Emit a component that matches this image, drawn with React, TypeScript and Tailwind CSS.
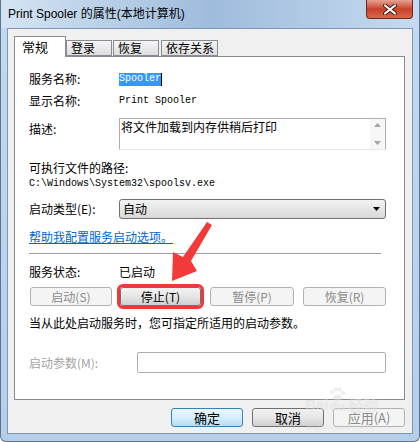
import React from 'react';

const cjk = "font-['Noto_Sans_CJK_SC','Noto_Sans',sans-serif]";
const mono = "font-['Liberation_Mono','Noto_Sans_CJK_SC',monospace]";

const Tab: React.FC<{ label: string; active?: boolean; className?: string }> = ({ label, active, className }) =>
  active ? (
    <div className={`relative z-10 h-[21px] w-[52px] -mb-[1px] border border-b-0 border-[#898c95] bg-white flex items-start pl-[7px] pt-[2px] text-[13px] leading-[16px] whitespace-nowrap ${className ?? ''}`}>
      {label}
    </div>
  ) : (
    <div className={`mt-[4px] h-[16px] border border-[#898c95] bg-gradient-to-b from-[#f6f6f6] to-[#dedede] flex items-center pl-[4px] text-[12px] leading-[14px] whitespace-nowrap overflow-hidden ${className ?? ''}`}>
      {label}
    </div>
  );

const Btn: React.FC<{ label: string; disabled?: boolean; primary?: boolean; className?: string }> = ({ label, disabled, primary, className }) => {
  let look = 'border-[#707070] bg-gradient-to-b from-[#f2f2f2] via-[#e6e6e6] to-[#cfcfcf] text-black';
  if (disabled) look = 'border-[#adb2b5] bg-[#f4f4f4] text-[#8b8b8b]';
  if (primary) look = 'border-[#3c7fb1] bg-gradient-to-b from-[#eaf6fd] via-[#d6effc] to-[#b6dcf3] text-black';
  return (
    <div className={`h-[19px] rounded-[3px] border flex items-center justify-center text-[12px] leading-[14px] ${look} ${className ?? ''}`}>
      {label}
    </div>
  );
};

export default function App() {
  return (
    <div className={`relative w-[420px] h-[442px] overflow-hidden bg-gradient-to-b from-[#c4d9ef] to-[#b5cfea] border-x border-b border-[#5d7594] rounded-b-[6px] ${cjk} text-black`}>
      {/* title bar */}
      <div className="h-[28px] flex items-start bg-gradient-to-r from-[#d5e4f3] via-[#9ebcdc] to-[#c6daef]">
        <span className="ml-[7px] mt-[7px] text-[12px] leading-[15px] font-['Liberation_Sans','Noto_Sans_CJK_SC',sans-serif]">
          Print Spooler 的属性(本地计算机)
        </span>
        <div className="ml-auto mr-[6px] w-[47px] h-[19px] rounded-b-[4px] border border-t-0 border-[#6b2a20] bg-gradient-to-b from-[#e6a191] via-[#c8402b] to-[#d8664a] flex items-center justify-center">
          <svg width="14" height="11" viewBox="0 0 14 11">
            <path d="M2 1.5 L12 9.5 M12 1.5 L2 9.5" stroke="#3a1a14" strokeWidth="4" strokeLinecap="round" />
            <path d="M2 1.5 L12 9.5 M12 1.5 L2 9.5" stroke="#ffffff" strokeWidth="2.2" strokeLinecap="round" />
          </svg>
        </div>
      </div>

      {/* client area */}
      <div className="ml-[6px] w-[406px] h-[406px] border border-[#7f97b3] bg-[#f0f0f0] flex flex-col pl-[6px] pr-[7px] pt-[7px]">
        {/* tabs */}
        <div className="flex items-start h-[20px]">
          <Tab label="常规" active />
          <Tab label="登录" className="w-[46px]" />
          <Tab label="恢复" className="w-[46px] ml-[1px]" />
          <Tab label="依存关系" className="w-[57px] ml-[2px]" />
        </div>

        {/* panel */}
        <div className="h-[344px] w-[391px] border border-[#898c95] bg-white flex flex-col pl-[14px] pr-[18px] text-[12px]">
          <div className="mt-[13px] h-[18px] flex items-center">
            <span className="w-[90px] leading-[14px]">服务名称:</span>
            <span className={`${mono} text-[10px] leading-[12px] h-[13px] bg-[#3399ff] text-white flex items-center`}>Spooler</span>
            <span className="w-[1px] h-[13px] bg-black" />
          </div>
          <div className="mt-[4px] h-[18px] flex items-center">
            <span className="w-[90px] leading-[14px]">显示名称:</span>
            <span className={`${mono} text-[10px] leading-[12px]`}>Print Spooler</span>
          </div>
          <div className="mt-[8px] h-[32px] flex items-start">
            <span className="w-[90px] pt-[3px] leading-[16px]">描述:</span>
            <div className="flex-1 h-[32px] border border-[#abadb3] border-b-[#e3e9ef] flex">
              <span className="flex-1 leading-[15px] pl-[1px]">将文件加载到内存供稍后打印</span>
              <div className="w-[15px] bg-[#f7f7f7] flex flex-col items-center justify-between py-[4px]">
                <svg width="7" height="4" viewBox="0 0 7 4"><path d="M0 4 L3.5 0 L7 4 Z" fill="#a3a3a3" /></svg>
                <svg width="7" height="4" viewBox="0 0 7 4"><path d="M0 0 L3.5 4 L7 0 Z" fill="#a3a3a3" /></svg>
              </div>
            </div>
          </div>
          <div className="mt-[10px] h-[16px] flex items-center leading-[14px]">可执行文件的路径:</div>
          <div className={`mt-[1px] h-[14px] flex items-center ${mono} text-[10px] leading-[12px]`}>C:\Windows\System32\spoolsv.exe</div>
          <div className="mt-[8px] h-[20px] flex items-center">
            <span className="w-[90px] leading-[14px]">启动类型(E):</span>
            <div className="flex-1 h-[20px] rounded-[3px] border border-[#707070] bg-gradient-to-b from-[#f3f3f3] via-[#e6e6e6] to-[#d8d8d8] flex items-center pl-[3px] pr-[5px]">
              <span className="flex-1 leading-[14px]">自动</span>
              <svg width="7" height="4" viewBox="0 0 7 4"><path d="M0 0 L3.5 4 L7 0 Z" fill="#000" /></svg>
            </div>
          </div>
          <div className="mt-[10px] h-[16px] flex items-center">
            <span className="text-[#0066cc] underline leading-[14px]">帮助我配置服务启动选项。</span>
          </div>
          <div className="mt-[8px] w-[352px] border-t border-[#a0a0a0]" />
          <div className="mt-[10px] h-[16px] flex items-center">
            <span className="w-[90px] leading-[14px]">服务状态:</span>
            <span className="leading-[14px]">已启动</span>
          </div>
          <div className="mt-[7px] flex items-center">
            <Btn label="启动(S)" disabled className="ml-[1px] w-[82px]" />
            <Btn label="停止(T)" className="ml-[8px] w-[81px] outline-[3px] outline-solid outline-[#f03838]" />
            <Btn label="暂停(P)" disabled className="ml-[9px] w-[84px]" />
            <Btn label="恢复(R)" disabled className="ml-[9px] w-[83px]" />
          </div>
          <div className="mt-[9px] h-[16px] flex items-center leading-[14px]">当从此处启动服务时，您可指定所适用的启动参数。</div>
          <div className="mt-[21px] h-[21px] flex items-center">
            <span className="w-[108px] leading-[14px] text-[#a3a3a3]">启动参数(M):</span>
            <div className="flex-1 h-[21px] border border-[#abadb3] rounded-[2px]" />
          </div>
        </div>

        {/* dialog buttons */}
        <div className="mt-[8px] flex justify-end gap-[9px]">
          <Btn label="确定" primary className="w-[72px] text-[13px]" />
          <Btn label="取消" className="w-[72px] text-[13px]" />
          <Btn label="应用(A)" disabled className="w-[72px] text-[13px]" />
        </div>
      </div>

      {/* watermark */}
      <div className="absolute left-[304px] top-[387px] pointer-events-none opacity-50 flex flex-col items-start text-[#e0e0e0]">
        <div className="flex items-end font-['Liberation_Sans',sans-serif] font-bold">
          <span className="text-[15px] leading-[15px]">Bai</span>
          <div className="flex flex-col items-center">
            <svg width="18" height="14" viewBox="0 0 18 14">
              <circle cx="4" cy="5" r="2" fill="#dcdcdc" />
              <circle cx="8" cy="2.5" r="2" fill="#dcdcdc" />
              <circle cx="12" cy="2.5" r="2" fill="#dcdcdc" />
              <circle cx="15" cy="6" r="2" fill="#dcdcdc" />
              <ellipse cx="9.5" cy="10.5" rx="4" ry="3" fill="#dcdcdc" />
            </svg>
            <span className="text-[13px] leading-[11px]">du</span>
          </div>
          <span className={`${cjk} text-[15px] leading-[15px] ml-[2px]`}>经验</span>
        </div>
        <span className="font-['Liberation_Sans',sans-serif] text-[8px] leading-[9px] mt-[10px] ml-[1px]">jingyan.baidu.com</span>
      </div>

      {/* red arrow annotation */}
      <svg className="absolute left-0 top-0 pointer-events-none" width="420" height="442" viewBox="0 0 420 442">
        <polygon points="206,222 211,225 190,261 196,271 171,281 172,252 182,257" fill="#f23a3a" />
      </svg>
    </div>
  );
}
